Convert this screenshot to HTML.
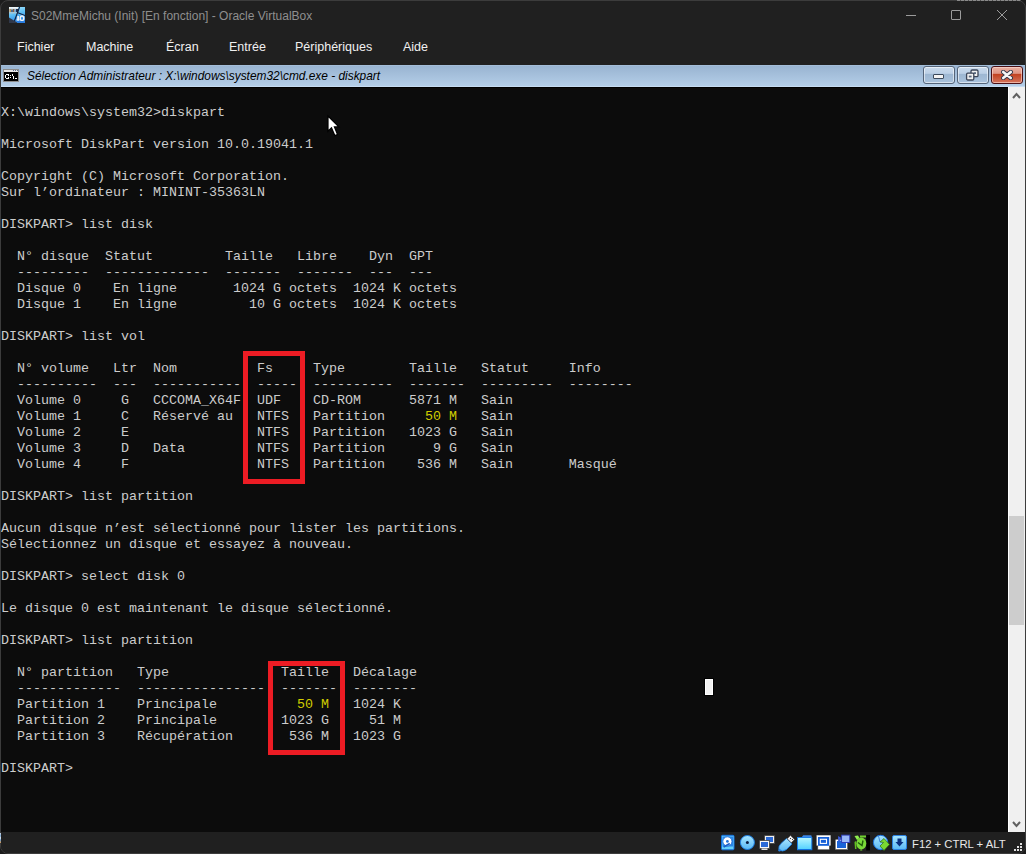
<!DOCTYPE html>
<html><head><meta charset="utf-8">
<style>
html,body{margin:0;padding:0;width:1026px;height:854px;overflow:hidden;background:#1c1c1c;}
*{box-sizing:border-box;}
#win{position:absolute;left:0;top:0;width:1026px;height:854px;background:#202020;border:1px solid #3c3c3c;border-radius:8px;overflow:hidden;}
.abs{position:absolute;}
#title{position:absolute;left:31px;top:6px;font:12px/20px "Liberation Sans",sans-serif;color:#8f8f8f;white-space:nowrap;}
.menu{position:absolute;top:38px;font:12.5px/18px "Liberation Sans",sans-serif;color:#f0f0f0;white-space:nowrap;}
#cmdbar{position:absolute;left:1px;top:65px;width:1024px;height:22px;background:linear-gradient(#99b4d1,#b4cee8);border-top:1px solid #a3bdd8;border-bottom:1px solid #c6dcf2;}
#cmdtitle{position:absolute;left:27px;top:67px;font:italic 11.9px/18px "Liberation Sans",sans-serif;color:#000;white-space:nowrap;}
#con{position:absolute;left:1px;top:87px;width:1007px;height:745px;background:#0c0c0c;border-top:1px solid #000;overflow:hidden;}
#txt{position:absolute;left:0;top:1px;font:13.333px/16px "Liberation Mono",monospace;color:#cccccc;white-space:pre;}
.y{color:#d0cc00;}
#sb{position:absolute;left:1008px;top:87px;width:17px;height:745px;background:#f0f0f0;border-left:1px solid #fff;}
#thumb{position:absolute;left:1009px;top:516px;width:15px;height:109px;background:#cdcdcd;}
.redbox{position:absolute;border:5px solid #ed1c24;}
#status{position:absolute;left:1px;top:832px;width:1024px;height:21px;background:#202020;border-radius:0 0 7px 7px;}
#f12{position:absolute;left:912px;top:835px;font:11.3px/18px "Liberation Sans",sans-serif;color:#e8e8e8;white-space:nowrap;}
.btn{position:absolute;top:66px;width:32px;height:18px;border:1px solid #55657a;border-radius:3px;background:linear-gradient(#c9daec 0%,#bcd0e6 40%,#9db7d2 44%,#a9c2dc 100%);box-shadow:inset 0 0 0 1px rgba(255,255,255,0.55);}
.btn.red{border-color:#4a1016;background:linear-gradient(#eab0a2 0%,#df9585 40%,#c2401f 44%,#d4745c 100%);box-shadow:inset 0 0 0 1px rgba(255,220,210,0.6);}
</style></head><body>
<div id="win"></div>
<svg class="abs" style="left:9px;top:7px" width="16" height="16" viewBox="0 0 16 16">
<defs><linearGradient id="vbg" x1="0" y1="0" x2="0.3" y2="1"><stop offset="0" stop-color="#b6ecff"/><stop offset="0.5" stop-color="#5ec0f4"/><stop offset="1" stop-color="#2a86e6"/></linearGradient></defs>
<rect x="0" y="0" width="16" height="16" fill="url(#vbg)"/>
<rect x="0" y="0" width="9" height="5.5" fill="#c8d4d8"/>
<rect x="0" y="0" width="9" height="1.6" fill="#eef6f8"/>
<rect x="0.5" y="2" width="1.5" height="3" fill="#b89050"/><rect x="2" y="2.5" width="2" height="2.5" fill="#4a6a90"/><rect x="4" y="2" width="1.5" height="3" fill="#8a6040"/><rect x="5.5" y="2.5" width="1.5" height="2.5" fill="#70a8d8"/><rect x="7" y="2" width="2" height="3" fill="#203050"/>
<rect x="0" y="5.5" width="9" height="1" fill="#a8c0cc"/>
<polygon points="0,10.5 0,16 9,16" fill="#30384a"/>
<rect x="8" y="13.5" width="8" height="2.5" fill="#2a7ee0"/>
<line x1="10.6" y1="0" x2="5.4" y2="14" stroke="#102040" stroke-width="1.1"/>
<line x1="8.3" y1="5.6" x2="16" y2="8.6" stroke="#102040" stroke-width="1.1"/>
<rect x="8.2" y="9" width="1.8" height="4.5" fill="#e8eef4"/><rect x="7.6" y="12.2" width="3" height="1.3" fill="#e8eef4"/>
<ellipse cx="13" cy="11.2" rx="1.8" ry="2.2" fill="none" stroke="#eef2f6" stroke-width="1.4"/>
</svg>
<div class="abs" style="left:906px;top:15px;width:10px;height:1px;background:#9c9c9c"></div>
<div class="abs" style="left:951px;top:10px;width:10px;height:10px;border:1px solid #9c9c9c;border-radius:1px"></div>
<svg class="abs" style="left:996px;top:9px" width="12" height="12" viewBox="0 0 12 12"><path d="M1 1 L11 11 M11 1 L1 11" stroke="#9c9c9c" stroke-width="1"/></svg>
<div id="title">S02MmeMichu (Init) [En fonction] - Oracle VirtualBox</div>
<div class="menu" style="left:17px">Fichier</div>
<div class="menu" style="left:86px">Machine</div>
<div class="menu" style="left:166px">Écran</div>
<div class="menu" style="left:229px">Entrée</div>
<div class="menu" style="left:295px">Périphériques</div>
<div class="menu" style="left:403px">Aide</div>
<div id="cmdbar"></div>
<div id="cmdtitle">Sélection Administrateur : X:\windows\system32\cmd.exe - diskpart</div>
<svg class="abs" style="left:3px;top:69px" width="16" height="13" viewBox="0 0 16 13">
<rect x="0" y="0" width="16" height="13" fill="#8c8c8c"/>
<rect x="1" y="1" width="14" height="2" fill="#e6e6e6"/>
<rect x="10" y="1" width="1" height="1" fill="#5a6e90"/><rect x="12" y="1" width="1" height="1" fill="#5a6e90"/><rect x="14" y="1" width="1" height="1" fill="#5a6e90"/>
<rect x="1" y="3" width="14" height="9" fill="#000"/>
<g fill="#fff" shape-rendering="crispEdges"><rect x="3" y="5" width="3" height="1"/><rect x="2" y="6" width="1" height="3"/><rect x="3" y="9" width="3" height="1"/><rect x="5" y="6" width="1" height="1"/><rect x="5" y="8" width="1" height="1"/><rect x="7" y="6" width="1" height="1"/><rect x="7" y="8" width="1" height="1"/><rect x="9" y="5" width="1" height="2"/><rect x="10" y="7" width="1" height="3"/><rect x="12" y="9" width="2" height="1"/></g>
</svg>
<div class="btn" style="left:923px"><div class="abs" style="left:9px;top:7px;width:11px;height:5px;background:#f4f4f4;border:1px solid #3c4a5c;border-radius:1px"></div></div>
<div class="btn" style="left:957px"><svg class="abs" style="left:7px;top:2px" width="16" height="14" viewBox="0 0 16 14">
<rect x="6" y="1" width="7" height="6.6" rx="1.2" fill="#f0f0f0" stroke="#3c4658" stroke-width="1.3"/><rect x="8.6" y="3.2" width="2.4" height="1.8" fill="#5a6a80"/>
<rect x="1.6" y="4.2" width="7.2" height="6.8" rx="1.2" fill="#f0f0f0" stroke="#3c4658" stroke-width="1.3"/><rect x="3.8" y="6.6" width="2.8" height="1.8" fill="#5a6a80"/>
</svg></div>
<div class="btn red" style="left:991px"><svg class="abs" style="left:9px;top:3px" width="12" height="10" viewBox="0 0 12 10">
<path d="M2.2 2 L9.8 8 M9.8 2 L2.2 8" stroke="#34384a" stroke-width="4.4" stroke-linecap="round"/>
<path d="M2.2 2 L9.8 8 M9.8 2 L2.2 8" stroke="#f6f6f6" stroke-width="2.6" stroke-linecap="round"/>
</svg></div>
<div id="con"><div id="txt">
X:\windows\system32>diskpart

Microsoft DiskPart version 10.0.19041.1

Copyright (C) Microsoft Corporation.
Sur l’ordinateur : MININT-35363LN

DISKPART> list disk

  N° disque  Statut         Taille   Libre    Dyn  GPT
  ---------  -------------  -------  -------  ---  ---
  Disque 0    En ligne       1024 G octets  1024 K octets
  Disque 1    En ligne         10 G octets  1024 K octets

DISKPART> list vol

  N° volume   Ltr  Nom          Fs     Type        Taille   Statut     Info
  ----------  ---  -----------  -----  ----------  -------  ---------  --------
  Volume 0     G   CCCOMA_X64F  UDF    CD-ROM      5871 M   Sain
  Volume 1     C   Réservé au   NTFS   Partition     <span class="y">50 M</span>   Sain
  Volume 2     E                NTFS   Partition   1023 G   Sain
  Volume 3     D   Data         NTFS   Partition      9 G   Sain
  Volume 4     F                NTFS   Partition    536 M   Sain       Masqué

DISKPART> list partition

Aucun disque n’est sélectionné pour lister les partitions.
Sélectionnez un disque et essayez à nouveau.

DISKPART> select disk 0

Le disque 0 est maintenant le disque sélectionné.

DISKPART> list partition

  N° partition   Type              Taille   Décalage
  -------------  ----------------  -------  --------
  Partition 1    Principale          <span class="y">50 M</span>   1024 K
  Partition 2    Principale        1023 G     51 M
  Partition 3    Récupération       536 M   1023 G

DISKPART></div></div>
<div id="sb"></div>
<div id="thumb"></div>
<div class="redbox" style="left:243px;top:351px;width:62px;height:133px"></div>
<div class="redbox" style="left:268px;top:661px;width:77px;height:94px"></div>
<svg class="abs" style="left:1012px;top:92px" width="9" height="7" viewBox="0 0 9 7"><path d="M1 6 L4.5 2 L8 6" stroke="#606060" stroke-width="2" fill="none"/></svg>
<svg class="abs" style="left:1012px;top:821px" width="9" height="7" viewBox="0 0 9 7"><path d="M1 1 L4.5 5 L8 1" stroke="#606060" stroke-width="2" fill="none"/></svg>

<div class="abs" style="left:704px;top:678px;width:10px;height:18px;background:#000"></div>
<div class="abs" style="left:705px;top:679px;width:8px;height:16px;background:#fff;border:1px solid #fff;"><div style="width:6px;height:14px;background:#f2f2f2"></div></div>
<svg class="abs" style="left:325px;top:113px" width="16" height="25" viewBox="0 0 16 25">
<path d="M3 3 V18.3 L6.5 14.9 L9.8 22.6 L12.5 21.5 L9.4 13.9 H13.8 Z" fill="#fff" stroke="#000" stroke-width="1.2" stroke-linejoin="miter"/></svg>
<div id="status"></div>
<svg class="abs" style="left:720px;top:834px" width="190" height="18" viewBox="0 0 190 18">
<defs>
<linearGradient id="gb" x1="0" y1="0" x2="0" y2="1"><stop offset="0" stop-color="#80d0ff"/><stop offset="1" stop-color="#3a9cf0"/></linearGradient>
<linearGradient id="gl" x1="0" y1="0" x2="0" y2="1"><stop offset="0" stop-color="#a8e6ff"/><stop offset="1" stop-color="#5ab8f4"/></linearGradient>
<linearGradient id="gg" x1="0" y1="0" x2="0" y2="1"><stop offset="0" stop-color="#9be040"/><stop offset="1" stop-color="#3a9a10"/></linearGradient>
<linearGradient id="gf" x1="0" y1="0" x2="0" y2="1"><stop offset="0" stop-color="#b8f6ff"/><stop offset="1" stop-color="#50d0ff"/></linearGradient>
</defs>
<!-- hdd 721..734 -->
<rect x="1.5" y="1.3" width="12.5" height="14.5" rx="1" fill="#66d0fa" stroke="#1470e0" stroke-width="1"/>
<rect x="2.5" y="2.5" width="10.5" height="10" fill="#2a86e6"/>
<circle cx="7.4" cy="7.4" r="4.6" fill="#ffffff" stroke="#1a6ad8" stroke-width="0.9"/><circle cx="7.4" cy="7.4" r="1.4" fill="#1e70d8"/>
<path d="M3.6 13 L9.8 9.5" stroke="#1a60c8" stroke-width="1.8"/>
<!-- cd 740..755 -->
<circle cx="27.4" cy="8.5" r="7" fill="url(#gl)" stroke="#1a7ee6" stroke-width="1"/><circle cx="27.4" cy="8.5" r="1.5" fill="#0a1a40"/>
<!-- network 759..774 -->
<rect x="44.5" y="1.5" width="10" height="8" fill="#f0f0f0" stroke="#404040" stroke-width="0.8"/><rect x="46" y="3" width="7" height="5" fill="#2a6ad8"/>
<rect x="39.5" y="6.5" width="10" height="8" fill="#f8f8f8" stroke="#404040" stroke-width="0.8"/><rect x="41" y="8" width="7" height="5" fill="#2a6ad8"/>
<rect x="41.5" y="14.5" width="6" height="1.5" fill="#e0e0e0"/>
<!-- usb 778..794 -->
<path d="M59 15.8 Q58 12.5 61 9.5 L66.5 4.5 L72 10 L66.5 15.5 Q62.5 18.5 59 15.8 Z" fill="url(#gl)" stroke="#1a7ee6" stroke-width="0.8"/>
<path d="M67.2 4.8 L70.5 1.5 L74.5 5.5 L71.2 8.8 Z" fill="#f0f0f0" stroke="#505050" stroke-width="0.6"/>
<rect x="70" y="4" width="1" height="1" fill="#404040"/><rect x="72" y="5" width="1" height="1" fill="#404040"/>
<circle cx="59.5" cy="16.2" r="1.2" fill="#2a80e0"/>
<!-- folder 797..812 -->
<path d="M81.5 3.6 L83.2 1.2 H91.3 L92 3.6 Z" fill="#3a86e6"/><rect x="77.5" y="3.5" width="14.3" height="12.2" fill="url(#gf)" stroke="#1a7ee8" stroke-width="1"/><rect x="77.5" y="15" width="14.3" height="1" fill="#1070e0"/>
<!-- display 816..831 -->
<path d="M96.3 1.1 H110.9 V11.8 H109.5 V15.7 H97.7 V11.8 H96.3 Z" fill="#ffffff" stroke="#202020" stroke-width="0.5"/>
<rect x="98" y="3" width="11.2" height="8.8" fill="#1660d8"/>
<rect x="100.3" y="5.3" width="6.2" height="4.1" fill="none" stroke="#ffffff" stroke-width="1.1"/>
<!-- video capture 835..850 -->
<rect x="115.2" y="5.2" width="12.5" height="10.5" fill="#ffffff" stroke="#202020" stroke-width="0.5"/>
<rect x="117" y="7" width="9" height="7" fill="#1a64d8"/>
<path d="M118.1 2 L120.8 3.5 V6.5 L118.1 7.7 Z" fill="#3a5ad8"/>
<rect x="121.6" y="1.1" width="8.2" height="7.4" fill="#98b8f8" stroke="#2a3ab8" stroke-width="0.9"/>
<!-- turtle 854..870 -->
<rect x="146.2" y="1" width="3.8" height="15.5" fill="#000"/>
<path d="M134.5 2 L138 1.5 L139.5 4 L137 6 Z" fill="#90f050"/>
<rect x="140" y="1.5" width="6" height="2" fill="#70d030"/>
<path d="M134.5 8 L136 7 L136.5 15 L135 15 Z" fill="#60c020"/>
<ellipse cx="141.3" cy="9.5" rx="5" ry="6" fill="#78d838"/>
<path d="M141 15 L142.5 16.5 L140 16.5 Z" fill="#70d030"/>
<path d="M138 8.5 L142 11.5 L143 6.5" stroke="#1e5a0a" stroke-width="1.4" fill="none"/>
<!-- green arrow 873..889 -->
<ellipse cx="160.6" cy="8.5" rx="7.2" ry="7.2" fill="url(#gl)" stroke="#1a70e0" stroke-width="1"/><path d="M158.5 2 L160 8" stroke="#2a70d0" stroke-width="0.8"/>
<path d="M163.5 8.5 L160 12 L164 16.5 L169.5 10.5 L164 4.5 L160 8 Z" fill="#7ad832" stroke="#2a6a10" stroke-width="0.7"/>
<!-- download 892..907 -->
<rect x="172.5" y="1.5" width="14" height="14" rx="1.5" fill="url(#gl)" stroke="#2a80e0"/>
<path d="M177.5 4.5 H181.5 V8 H183.5 L179.5 12.5 L175.5 8 H177.5 Z" fill="#0a3080"/>
</svg>
<div id="f12">F12 + CTRL + ALT</div>
<svg class="abs" style="left:1013px;top:842px" width="10" height="10" viewBox="0 0 10 10" fill="#e0e0e0">
<rect x="7" y="1" width="2" height="2"/><rect x="4" y="4" width="2" height="2"/><rect x="7" y="4" width="2" height="2"/><rect x="1" y="7" width="2" height="2"/><rect x="4" y="7" width="2" height="2"/><rect x="7" y="7" width="2" height="2"/></svg>
<div class="abs" style="left:957px;top:0;width:64px;height:1px;background:repeating-linear-gradient(90deg,#8a8a8a 0 3px,#505050 3px 4px)"></div>
<div class="abs" style="left:0;top:833px;width:1px;height:10px;background:linear-gradient(#c8d4e8,#7aa4cc 30%,#e4ecf4 50%,#6a9ccc 70%,#d8954e)"></div>
</body></html>
